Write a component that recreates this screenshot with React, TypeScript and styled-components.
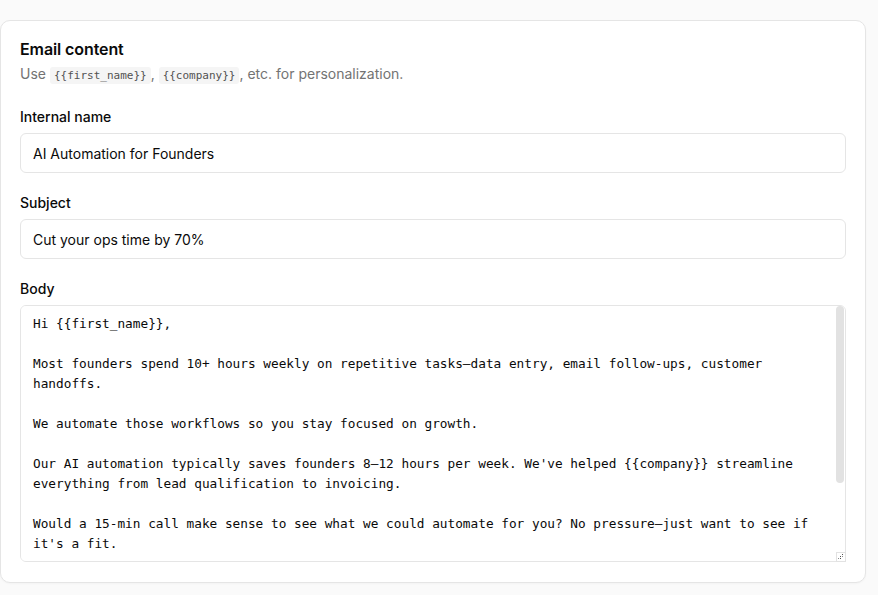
import React from "react";
import styled, { createGlobalStyle } from "styled-components";

const GlobalStyle = createGlobalStyle`
  html, body {
    margin: 0;
    padding: 0;
    background: #fafafa;
    font-family: Inter, "Noto Sans", sans-serif;
    color: #0a0a0a;
  }
  * { box-sizing: border-box; }
`;

const Page = styled.div`
  padding-top: 20px;
  width: 878px;
  height: 595px;
  overflow: hidden;
`;

const Card = styled.section`
  width: 866px;
  background: #ffffff;
  border: 1px solid #e5e5e5;
  border-radius: 10px;
  padding: 19px 19px 20px 19px;
  display: flex;
  flex-direction: column;
  box-shadow: 0 1px 2px rgba(0, 0, 0, 0.03);
`;

const Title = styled.h2`
  margin: 0;
  font-size: 16px;
  line-height: 18px;
  font-weight: 600;
  letter-spacing: -0.1px;
  color: #0a0a0a;
`;

const Subtitle = styled.p`
  margin: 6px 0 0 0;
  font-size: 14px;
  line-height: 20px;
  color: #737373;
`;

const Code = styled.code`
  font-family: "DejaVu Sans Mono", "Liberation Mono", monospace;
  font-size: 11px;
  background: #f5f5f5;
  color: #525252;
  border-radius: 3px;
  padding: 2px 4px;
`;

const Field = styled.div<{ $mt: number }>`
  display: flex;
  flex-direction: column;
  gap: 7px;
  margin-top: ${(p) => p.$mt}px;
`;

const Label = styled.label`
  font-size: 14px;
  line-height: 18px;
  font-weight: 500;
  color: #0a0a0a;
`;

const Input = styled.input`
  height: 40px;
  width: 100%;
  border: 1px solid #e5e5e5;
  border-radius: 6px;
  padding: 0 12px;
  font-family: Inter, "Noto Sans", sans-serif;
  font-size: 14px;
  color: #0a0a0a;
  background: #fff;
  outline: none;
`;

const TextAreaWrap = styled.div`
  position: relative;
  display: flex;
`;

const TextArea = styled.textarea`
  width: 100%;
  height: 257px;
  border: 1px solid #e5e5e5;
  border-radius: 6px;
  padding: 8px 12px;
  font-family: "DejaVu Sans Mono", "Liberation Mono", monospace;
  font-size: 12.75px;
  line-height: 20px;
  color: #0a0a0a;
  background: #fff;
  outline: none;
  resize: none;
  overflow-y: auto;
  scrollbar-width: none;
  &::-webkit-scrollbar {
    display: none;
  }
`;

const ScrollThumb = styled.div`
  position: absolute;
  top: 1px;
  right: 2px;
  width: 8px;
  height: 177px;
  border-radius: 4px;
  background: #e2e2e2;
  pointer-events: none;
`;

const ResizeCorner = styled.div`
  position: absolute;
  right: 0;
  bottom: 0;
  width: 10px;
  height: 10px;
  background: #ffffff;
  border: 1px solid #e2e2e2;
  display: flex;
  align-items: center;
  justify-content: center;
  pointer-events: none;
`;

const bodyText = `Hi {{first_name}},

Most founders spend 10+ hours weekly on repetitive tasks—data entry, email follow-ups, customer handoffs.

We automate those workflows so you stay focused on growth.

Our AI automation typically saves founders 8–12 hours per week. We've helped {{company}} streamline everything from lead qualification to invoicing.

Would a 15-min call make sense to see what we could automate for you? No pressure—just want to see if it's a fit.

Best,
{{sender_name}}

P.S. Reply "stop" and I won't follow up.`;

export default function App() {
  return (
    <>
      <GlobalStyle />
      <Page>
        <Card>
          <Title>Email content</Title>
          <Subtitle>
            Use <Code>{"{{first_name}}"}</Code>, <Code>{"{{company}}"}</Code>, etc. for
            personalization.
          </Subtitle>
          <Field $mt={22}>
            <Label>Internal name</Label>
            <Input defaultValue="AI Automation for Founders" />
          </Field>
          <Field $mt={21}>
            <Label>Subject</Label>
            <Input defaultValue="Cut your ops time by 70%" />
          </Field>
          <Field $mt={21}>
            <Label>Body</Label>
            <TextAreaWrap>
              <TextArea defaultValue={bodyText} spellCheck={false} />
              <ScrollThumb />
              <ResizeCorner>
                <svg width="6" height="6" viewBox="0 0 6 6">
                  <rect x="4" y="0" width="1" height="1" fill="#555" />
                  <rect x="2" y="2" width="1" height="1" fill="#555" />
                  <rect x="4" y="2" width="1" height="1" fill="#888" />
                  <rect x="0" y="4" width="1" height="1" fill="#888" />
                  <rect x="2" y="4" width="1" height="1" fill="#555" />
                </svg>
              </ResizeCorner>
            </TextAreaWrap>
          </Field>
        </Card>
      </Page>
    </>
  );
}
